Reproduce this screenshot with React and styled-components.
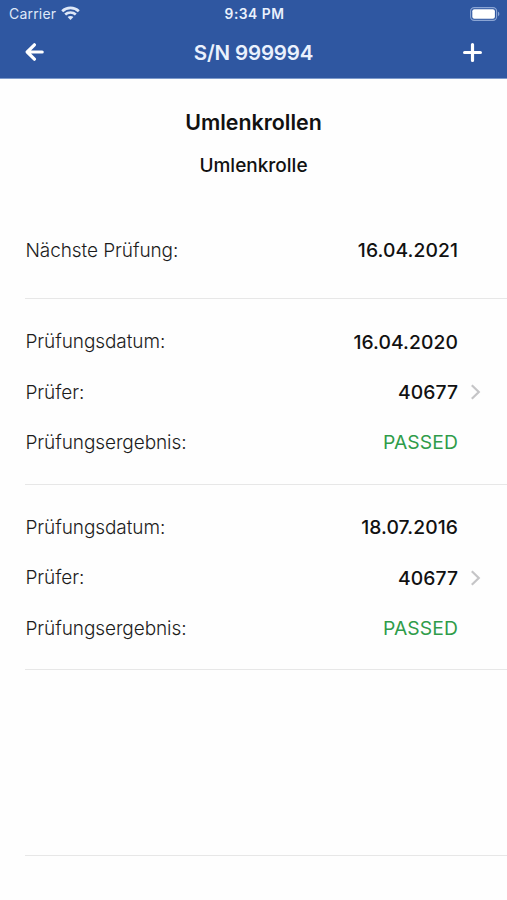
import React from 'react';
import styled, { createGlobalStyle } from 'styled-components';

const GlobalStyle = createGlobalStyle`
  * {
    box-sizing: border-box;
  }

  body {
    margin: 0;
    background: #fefefe;
    font-family: Inter, 'Liberation Sans', sans-serif;
  }
`;

const Screen = styled.div`
  display: flex;
  flex-direction: column;
  width: 507px;
  height: 900px;
  overflow: hidden;
  background: #fefefe;
`;

const Header = styled.header`
  height: 79px;
  background: #2f57a1;
  border-bottom: 1px solid #7d9acb;
  color: #fff;
`;

const StatusBar = styled.div`
  display: grid;
  grid-template-columns: 1fr auto 1fr;
  align-items: center;
  height: 27px;
  padding: 0 7px 0 9px;
`;

const Carrier = styled.div`
  display: flex;
  align-items: center;
  gap: 5px;
  font-size: 14px;
  letter-spacing: 0.2px;
  color: #dfe8f8;
`;

const Clock = styled.div`
  font-size: 13.8px;
  font-weight: 600;
  letter-spacing: 0.5px;
  color: #eaf1fd;
`;

const BatterySlot = styled.div`
  display: flex;
  justify-content: flex-end;
`;

const NavBar = styled.nav`
  display: grid;
  grid-template-columns: 1fr auto 1fr;
  align-items: center;
  height: 50px;
  padding: 0 25px;
`;

const NavButton = styled.button`
  display: flex;
  justify-self: ${props => props.$end ? 'end' : 'start'};
  padding: 0;
  border: 0;
  background: none;
  color: #fff;
`;

const NavTitle = styled.h1`
  margin: 0;
  font-size: 20.5px;
  font-weight: 600;
  letter-spacing: -0.15px;
  color: #eaf1fd;
`;

const Heading = styled.section`
  display: flex;
  flex-direction: column;
  align-items: center;
  height: 146px;
  padding-top: 29px;
  color: #111;
`;

const ProductGroup = styled.h2`
  margin: 0;
  font-size: 21.4px;
  font-weight: 600;
  line-height: 28px;
`;

const ProductName = styled.p`
  margin: 17px 0 0;
  font-size: 19px;
  font-weight: 500;
  line-height: 26px;
`;

const Section = styled.section`
  display: flex;
  flex-direction: column;
  height: ${props => props.$height}px;
  margin-left: 25px;
  padding-top: ${props => props.$top || 0}px;
  border-bottom: 1px solid #e7e7e7;
`;

const Row = styled.div`
  display: flex;
  align-items: center;
  height: 50.3px;
  padding-right: 26px;
  padding-left: 0.5px;
`;

const Label = styled.span`
  flex: 1;
  font-size: 19px;
  font-weight: 300;
  letter-spacing: -0.08px;
  color: #1c1c1c;
`;

const Value = styled.span`
  font-size: 19.3px;
  font-weight: ${props => props.$passed ? 400 : 500};
  letter-spacing: ${props => props.$passed ? 0.1 : 0.08}px;
  color: ${props => props.$passed ? '#2f9c4a' : '#111'};
`;

const Accessory = styled.span`
  display: flex;
  justify-content: flex-end;
  width: 23px;
`;

const WifiIcon = () => (
  <svg width="19" height="15" viewBox="0 0 19 15" fill="none" stroke="currentColor" strokeWidth="2.7">
    <path d="M1.2 5.2C5.8 0.7 13.2 0.7 17.8 5.2" />
    <path d="M4.2 8.5C7.1 5.8 11.9 5.8 14.8 8.5" />
    <path d="M9.5 14L6.6 11.1C8.2 9.7 10.8 9.7 12.4 11.1Z" fill="currentColor" stroke="none" />
  </svg>
);

const BatteryIcon = () => (
  <svg width="30" height="14" viewBox="0 0 30 14">
    <rect x="0.6" y="0.6" width="26" height="12.8" rx="3.6" fill="none" stroke="#8ba5d4" strokeWidth="1.1" />
    <rect x="2.3" y="2.3" width="22.6" height="9.4" rx="2" fill="#fff" />
    <path d="M28 4.8C29.8 5.4 29.8 8.6 28 9.2Z" fill="#8ba5d4" />
  </svg>
);

const BackIcon = () => (
  <svg width="19" height="18" viewBox="0 0 19 18" fill="none" stroke="currentColor" strokeWidth="3.2" strokeLinecap="round" strokeLinejoin="round">
    <path d="M9.4 1.8L2.2 9L9.4 16.2M2.8 9H17.2" />
  </svg>
);

const PlusIcon = () => (
  <svg width="19" height="19" viewBox="0 0 19 19" fill="none" stroke="currentColor" strokeWidth="3.2" strokeLinecap="round">
    <path d="M9.5 1.6V17.4M1.6 9.5H17.4" />
  </svg>
);

const ChevronIcon = () => (
  <svg width="11" height="16" viewBox="0 0 11 16" fill="none" stroke="#c5c5c7" strokeWidth="2.2">
    <path d="M1.8 1.2L8.8 8L1.8 14.8" />
  </svg>
);

const inspections = [
  { date: '16.04.2020', inspector: '40677', result: 'PASSED' },
  { date: '18.07.2016', inspector: '40677', result: 'PASSED' }
];

const Inspection = ({ date, inspector, result }) => (
  <Section $height={185.7} $top={17.6}>
    <Row>
      <Label>Prüfungsdatum:</Label>
      <Value>{date}</Value>
      <Accessory />
    </Row>
    <Row>
      <Label>Prüfer:</Label>
      <Value>{inspector}</Value>
      <Accessory><ChevronIcon /></Accessory>
    </Row>
    <Row>
      <Label>Prüfungsergebnis:</Label>
      <Value $passed>{result}</Value>
      <Accessory />
    </Row>
  </Section>
);

const App = () => (
  <>
    <GlobalStyle />
    <Screen>
      <Header>
        <StatusBar>
          <Carrier>Carrier <WifiIcon /></Carrier>
          <Clock>9:34 PM</Clock>
          <BatterySlot><BatteryIcon /></BatterySlot>
        </StatusBar>
        <NavBar>
          <NavButton aria-label="Zurück"><BackIcon /></NavButton>
          <NavTitle>S/N 999994</NavTitle>
          <NavButton $end aria-label="Hinzufügen"><PlusIcon /></NavButton>
        </NavBar>
      </Header>

      <Heading>
        <ProductGroup>Umlenkrollen</ProductGroup>
        <ProductName>Umlenkrolle</ProductName>
      </Heading>

      <Section $height={74}>
        <Row>
          <Label>Nächste Prüfung:</Label>
          <Value>16.04.2021</Value>
          <Accessory />
        </Row>
      </Section>

      {inspections.map(inspection => (
        <Inspection key={inspection.date} {...inspection} />
      ))}
      <Section $height={185.7} />
    </Screen>
  </>
);

export default App;
